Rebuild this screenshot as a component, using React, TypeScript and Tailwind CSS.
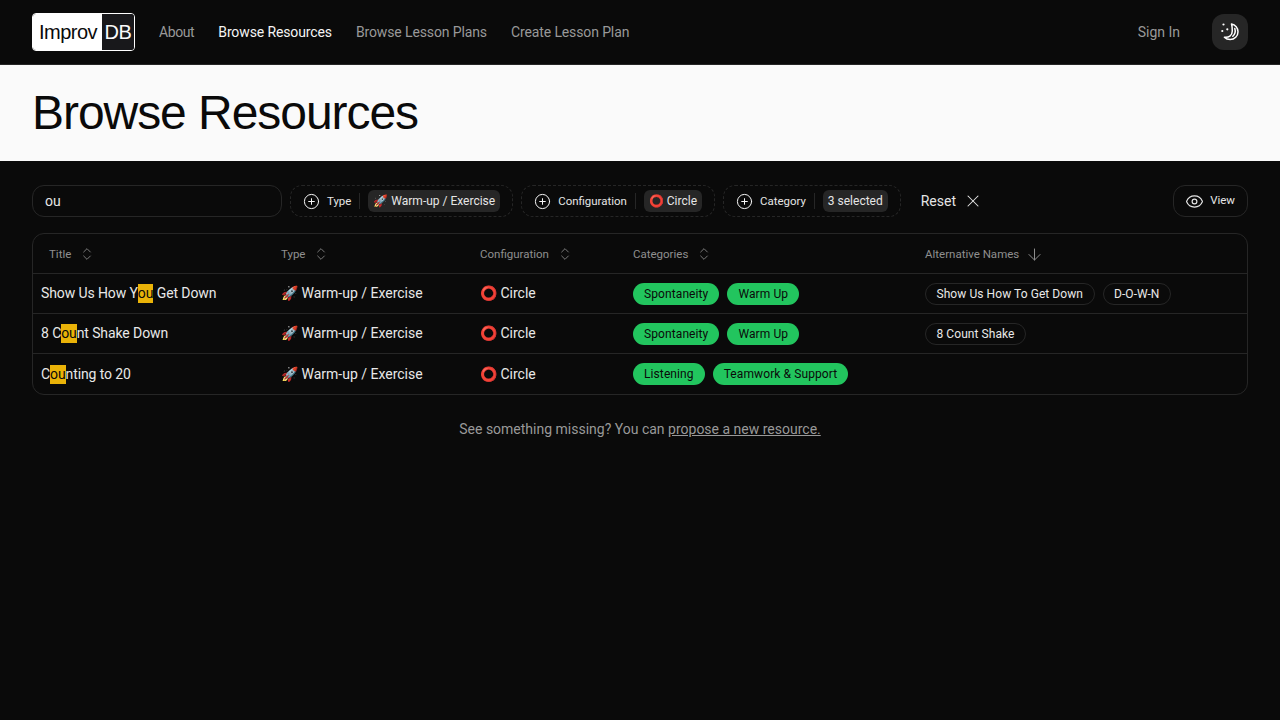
import { CirclePlus, ChevronsUpDown, ArrowDown, Eye, X } from "lucide-react";

const ROWS = [
  { pre: "Show Us How Y", post: " Get Down", cats: ["Spontaneity", "Warm Up"], alts: ["Show Us How To Get Down", "D-O-W-N"] },
  { pre: "8 C", post: "nt Shake Down", cats: ["Spontaneity", "Warm Up"], alts: ["8 Count Shake"] },
  { pre: "C", post: "nting to 20", cats: ["Listening", "Teamwork & Support"], alts: [] as string[] },
];

function MoonIcon() {
  return (
    <svg width="20" height="20" viewBox="0 0 20 20" fill="none" stroke="white">
      <path d="M11.500 2c3.800.6 6.500 3.900 6.500 7.700 0 4.400-3.500 7.900-7.900 7.900-2.300 0-4.300-.9-5.700-2.400 4.200.7 7.900-1.600 7.900-6.200 0-2.600-.2-5-.8-7z" strokeWidth="1.500" strokeLinejoin="round" />
      <path d="M14.800 6.500c.8 2.500.4 5.500-2 7.800" strokeWidth="1.500" strokeLinecap="round" />
      <circle cx="3.500" cy="2.500" r="1.100" fill="white" stroke="none" />
      <circle cx="2.300" cy="9" r="1.100" fill="white" stroke="none" />
      <circle cx="7.300" cy="7.300" r="1.100" fill="white" stroke="none" />
    </svg>
  );
}

function FilterChip({ label, value }: { label: string; value: string }) {
  return (
    <div className="flex h-8 items-center rounded-xl border border-dashed border-[#262626] pl-[12px] pr-3 text-xs text-[#fafafa]">
      <CirclePlus size={17} strokeWidth={1.4} className="mr-[7px]" />
      <span className="pt-px text-[11.45px] text-[#e5e5e5]">{label}</span>
      <div className="mx-2 h-4 w-px bg-[#262626]" />
      <span className="flex h-[22px] items-center rounded-md bg-[#262626] px-[5px] text-xs text-[#e5e5e5]">{value}</span>
    </div>
  );
}

function HeadCell({ label, sorted, first }: { label: string; sorted?: boolean; first?: boolean }) {
  return (
    <th className="h-[39px] px-2 pt-[2px] text-left font-normal">
      <div className={first ? "flex items-center pl-2 text-[11.5px] text-[#8f8f8f]" : "flex items-center text-[11.5px] text-[#8f8f8f]"}>
        <span>{label}</span>
        {sorted ? (
          <ArrowDown size={19} strokeWidth={1.25} className="ml-[6px]" />
        ) : (
          <ChevronsUpDown size={16} strokeWidth={1.25} className="ml-2" />
        )}
      </div>
    </th>
  );
}

export default function App() {
  return (
    <div className="min-h-[720px] bg-[#0a0a0a] text-[#fafafa] font-['Roboto',sans-serif]">
      <header className="flex h-[65px] items-center border-b border-[#262626] px-8">
        <div className="flex h-[38px] w-[103px] overflow-hidden rounded border border-white font-['Liberation_Sans',sans-serif] text-xl tracking-tight">
          <span className="flex w-[69px] items-center justify-center bg-white pl-px text-[#0a0a0a]">Improv</span>
          <span className="flex flex-1 items-center justify-center bg-[#18181b]">DB</span>
        </div>
        <nav className="ml-6 flex gap-6 text-sm tracking-[-0.12px] text-[#999999]">
          <span className="tracking-[-0.4px]">About</span>
          <span className="text-[#f5f5f5]">Browse Resources</span>
          <span>Browse Lesson Plans</span>
          <span>Create Lesson Plan</span>
        </nav>
        <span className="ml-auto text-sm text-[#999999]">Sign In</span>
        <div className="ml-8 flex h-9 w-9 items-center justify-center rounded-xl bg-[#262626]">
          <MoonIcon />
        </div>
      </header>

      <div className="flex h-24 items-center bg-[#fafafa] px-8 font-['Liberation_Sans',sans-serif] text-5xl tracking-[-1.05px] text-[#0a0a0a]">
        <h1>Browse Resources</h1>
      </div>

      <main className="px-8 pt-6">
        <div className="flex items-center gap-2">
          <div className="flex h-8 w-[250px] items-center rounded-xl border border-[#262626] px-3 text-sm text-[#e5e5e5]">ou</div>
          <FilterChip label="Type" value="🚀 Warm-up / Exercise" />
          <FilterChip label="Configuration" value="⭕ Circle" />
          <FilterChip label="Category" value="3 selected" />
          <div className="ml-3 flex items-center text-sm text-[#e5e5e5]">
            Reset
            <X size={20} strokeWidth={1.25} className="ml-[7px]" />
          </div>
          <div className="ml-auto flex h-8 items-center rounded-xl border border-[#262626] pl-[11px] pr-3 text-[11.5px] text-[#e5e5e5]">
            <Eye size={19} strokeWidth={1.5} className="mr-[6px]" />
            View
          </div>
        </div>

        <div className="mt-4 overflow-hidden rounded-xl border border-[#262626]">
          <table className="w-full table-fixed border-collapse">
            <colgroup>
              <col className="w-[240px]" />
              <col className="w-[199px]" />
              <col className="w-[153px]" />
              <col className="w-[292px]" />
              <col />
            </colgroup>
            <thead>
              <tr>
                <HeadCell label="Title" first />
                <HeadCell label="Type" />
                <HeadCell label="Configuration" />
                <HeadCell label="Categories" />
                <HeadCell label="Alternative Names" sorted />
              </tr>
            </thead>
            <tbody className="text-sm text-[#e8e8e8]">
              {ROWS.map((r, i) => (
                <tr key={r.pre} className={i === 2 ? "h-[41px] border-t border-[#262626]" : "h-10 border-t border-[#262626]"}>
                  <td className="px-2 tracking-[-0.1px]">
                    {r.pre}
                    <mark className="inline-block h-[19px] bg-[#eab308] leading-[19px] text-[#0a0a0a]">ou</mark>
                    {r.post}
                  </td>
                  <td className="px-2">🚀 Warm-up / Exercise</td>
                  <td className="px-2">⭕ Circle</td>
                  <td className="px-2 pt-px">
                    <div className="flex gap-2">
                      {r.cats.map((c) => (
                        <span key={c} className="flex h-[22px] items-center rounded-full bg-[#22c55e] px-[11px] text-xs tracking-[0.1px] text-[#0a0a0a]">
                          {c}
                        </span>
                      ))}
                    </div>
                  </td>
                  <td className="px-2 pt-px">
                    <div className="flex gap-2">
                      {r.alts.map((a) => (
                        <span key={a} className="flex h-[22px] items-center rounded-full border border-[#262626] px-[10.5px] text-xs tracking-[0.07px]">
                          {a}
                        </span>
                      ))}
                    </div>
                  </td>
                </tr>
              ))}
            </tbody>
          </table>
        </div>

        <p className="mt-6 text-center text-sm text-[#999999]">
          See something missing? You can <span className="underline">propose a new resource.</span>
        </p>
      </main>
    </div>
  );
}
